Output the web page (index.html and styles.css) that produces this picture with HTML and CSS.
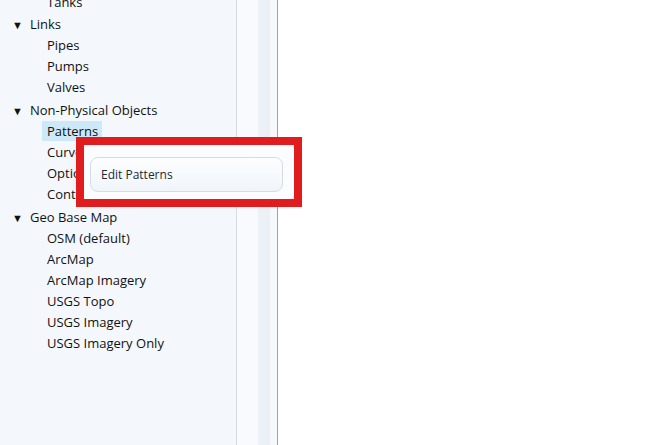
FILE: index.html
```html
<!DOCTYPE html>
<html lang="en">
<head>
  <meta charset="UTF-8">
  <title>Browser</title>
  <link rel="stylesheet" href="styles.css">
</head>
<body>
  <div class="app">
    <aside class="sidebar">
      <ul class="tree">
        <li class="leaf">Tanks</li>
        <li class="group">
          <div class="node"><span class="caret">&#9660;</span>Links</div>
          <ul>
            <li class="leaf">Pipes</li>
            <li class="leaf">Pumps</li>
            <li class="leaf">Valves</li>
          </ul>
        </li>
        <li class="group">
          <div class="node"><span class="caret">&#9660;</span>Non-Physical Objects</div>
          <ul>
            <li class="leaf"><span class="selected">Patterns</span></li>
            <li class="leaf">Curves</li>
            <li class="leaf">Options</li>
            <li class="leaf">Controls</li>
          </ul>
        </li>
        <li class="group">
          <div class="node"><span class="caret">&#9660;</span>Geo Base Map</div>
          <ul>
            <li class="leaf">OSM (default)</li>
            <li class="leaf">ArcMap</li>
            <li class="leaf">ArcMap Imagery</li>
            <li class="leaf">USGS Topo</li>
            <li class="leaf">USGS Imagery</li>
            <li class="leaf">USGS Imagery Only</li>
          </ul>
        </li>
      </ul>
    </aside>
    <div class="gutter"></div>
    <main class="canvas"></main>
  </div>

  <!-- context menu for the selected tree item -->
  <div class="context-menu">
    <div class="menu-item">Edit Patterns</div>
  </div>
  <div class="callout"></div>
</body>
</html>
```

FILE: styles.css
```css
body {
  margin: 0;
  font-family: "Open Sans", "Noto Sans", sans-serif;
  font-size: 13px;
  color: #111111;
  background: #ffffff;
  overflow: hidden;
}

.app {
  display: flex;
  height: 445px;
}

.sidebar {
  width: 236px;
  background-color: #f4f8fc;
  border-right: 1px solid #d3dbe3;
  overflow: hidden;
}

.gutter {
  width: 40px;
  background: linear-gradient(to right,
    #f8fafd 0, #f8fafd 21px,
    #edf2f7 21px, #eaf0f6 33px,
    #f6f9fc 33px, #f6f9fc 40px);
  border-right: 1px solid #a2a2a2;
}

.canvas {
  flex: 1;
  background: #ffffff;
}

.tree,
.tree ul {
  list-style: none;
  margin: 0;
  padding: 0;
}

.tree {
  margin-top: -8px;
}

.group {
  margin: 1px 0 2px;
}

.node,
.leaf {
  height: 21px;
  line-height: 21px;
  white-space: nowrap;
}

.node {
  padding-left: 12px;
}

.caret {
  display: inline-block;
  width: 18px;
  font-size: 11px;
  color: #111111;
  vertical-align: top;
}

.leaf {
  padding-left: 47px;
}

.selected {
  display: inline-block;
  margin-left: -5px;
  padding: 0 4px 0 5px;
  line-height: 20px;
  background-color: #cde8f7;
}

.context-menu {
  position: absolute;
  left: 79px;
  top: 143px;
  width: 216px;
  height: 58px;
  padding: 13px 11px 0 10px;
  box-sizing: border-box;
  background: #fafcfe;
  border: 1px solid #dfe6ee;
  border-radius: 8px;
  box-shadow: 0 2px 8px rgba(40, 60, 90, 0.15);
  font-size: 12px;
}

.menu-item {
  height: 35px;
  line-height: 33px;
  padding-left: 10px;
  box-sizing: border-box;
  border: 1px solid #d3dde8;
  border-radius: 8px;
  background: linear-gradient(#fdfeff, #f0f5fa);
  color: #1d2a36;
}

.callout {
  position: absolute;
  left: 76px;
  top: 137px;
  width: 226px;
  height: 70px;
  box-sizing: border-box;
  border: 8px solid #e11c1f;
}
```
